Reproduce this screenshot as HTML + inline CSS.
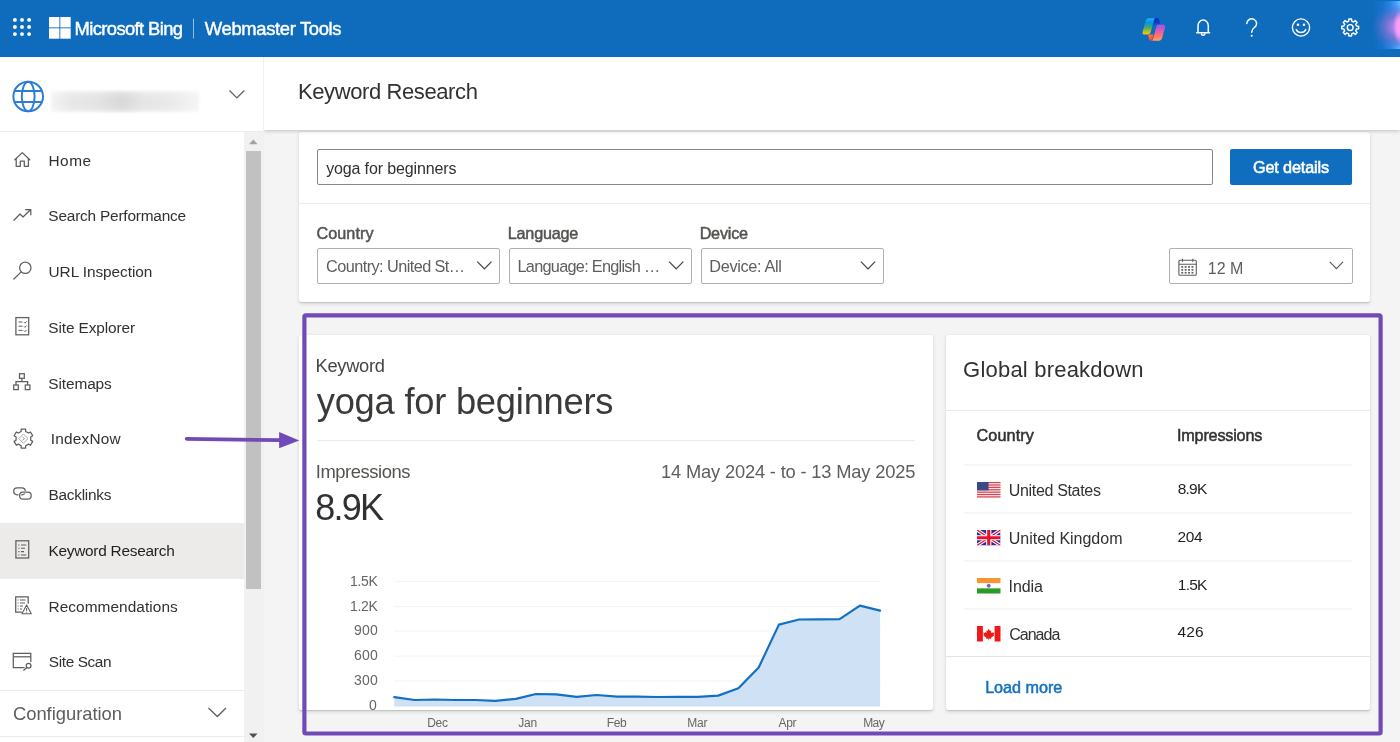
<!DOCTYPE html>
<html lang="en"><head><meta charset="utf-8"><title>Keyword Research - Bing Webmaster Tools</title>
<style>

*{box-sizing:border-box;margin:0;padding:0}
html,body{width:1400px;height:742px;overflow:hidden;background:#f4f4f4;font-family:"Liberation Sans",sans-serif;}
body{position:relative}
.a{position:absolute}
.t{position:absolute;white-space:pre;line-height:1;font-family:"Liberation Sans",sans-serif;}
.card{position:absolute;background:#fff;border-radius:2px;box-shadow:0 1.6px 3.6px rgba(0,0,0,.13),0 .3px .9px rgba(0,0,0,.11)}
.hl{position:absolute;height:1px;background:#edebe9}
.dd{position:absolute;height:36px;border:1px solid #b3b1af;border-radius:2px;background:#fff}
svg{position:absolute;overflow:visible}
#texts{position:absolute;left:0;top:0;width:1400px;height:742px;will-change:transform}

</style></head><body>

<!-- main area cards -->
<div class="card" style="left:299px;top:132px;width:1071px;height:170px"></div>
<div class="hl" style="left:299px;top:203px;width:1071px"></div>
<div class="a" style="left:317px;top:149px;width:896px;height:36px;border:1px solid #888684;border-radius:2px;background:#fff"></div>
<div class="a" style="left:1230px;top:149px;width:122px;height:36px;border-radius:2px;background:#106ebe"></div>
<div class="dd" style="left:317px;top:248px;width:183px"></div>
<div class="dd" style="left:509px;top:248px;width:182.500px"></div>
<div class="dd" style="left:700.500px;top:248px;width:183px"></div>
<div class="dd" style="left:1169px;top:248px;width:183.500px"></div>

<div class="card" style="left:299px;top:335px;width:634px;height:375px"></div>
<div class="hl" style="left:317px;top:440px;width:598px"></div>
<div class="card" style="left:946px;top:335px;width:424px;height:375px"></div>
<div class="hl" style="left:946px;top:410px;width:424px"></div>
<div class="hl" style="left:964px;top:464px;width:388px;height:2px;background:#f6f5f4"></div>
<div class="hl" style="left:964px;top:511.500px;width:388px;height:2px;background:#f6f5f4"></div>
<div class="hl" style="left:964px;top:559.500px;width:388px;height:2px;background:#f6f5f4"></div>
<div class="hl" style="left:964px;top:607.500px;width:388px;height:2px;background:#f6f5f4"></div>
<div class="hl" style="left:946px;top:656px;width:424px;background:#e6e4e2"></div>

<!-- CHART -->
<svg id="chart" style="left:0;top:0" width="1400" height="742" viewBox="0 0 1400 742">
<line x1="394" y1="581.5" x2="880.500" y2="581.5" stroke="#f3f3f3" stroke-width="1"/>
<line x1="394" y1="606.4" x2="880.500" y2="606.4" stroke="#f3f3f3" stroke-width="1"/>
<line x1="394" y1="631.2" x2="880.500" y2="631.2" stroke="#f3f3f3" stroke-width="1"/>
<line x1="394" y1="656.1" x2="880.500" y2="656.1" stroke="#f3f3f3" stroke-width="1"/>
<line x1="394" y1="680.9" x2="880.500" y2="680.9" stroke="#f3f3f3" stroke-width="1"/>
<line x1="394" y1="705.8" x2="880.500" y2="705.8" stroke="#f3f3f3" stroke-width="1"/>
<path d="M394.3,697.2 L414.5,700.0 L434.8,699.5 L455.0,700.0 L475.3,700.0 L495.5,700.9 L515.8,698.9 L536.0,694.0 L556.2,694.3 L576.5,696.8 L596.7,695.0 L617.0,696.6 L637.2,696.6 L657.4,697.0 L677.7,696.8 L697.9,696.8 L718.2,695.6 L738.4,688.3 L758.7,667.5 L778.9,624.6 L799.1,619.5 L819.4,619.4 L839.6,619.1 L859.9,605.6 L880.1,610.6 L880.1,706.5 L394.3,706.5 Z" fill="#cfe2f5"/>
<path d="M394.3,697.2 L414.5,700.0 L434.8,699.5 L455.0,700.0 L475.3,700.0 L495.5,700.9 L515.8,698.9 L536.0,694.0 L556.2,694.3 L576.5,696.8 L596.7,695.0 L617.0,696.6 L637.2,696.6 L657.4,697.0 L677.7,696.8 L697.9,696.8 L718.2,695.6 L738.4,688.3 L758.7,667.5 L778.9,624.6 L799.1,619.5 L819.4,619.4 L839.6,619.1 L859.9,605.6 L880.1,610.6" fill="none" stroke="#1170c4" stroke-width="2.200" stroke-linejoin="round" stroke-linecap="round"/>

</svg>

<!-- FLAGS -->
<svg style="left:977.4px;top:482px" width="23.500" height="15.500" viewBox="0 0 24 16" preserveAspectRatio="none"><rect width="24" height="16" fill="#f7e9ec"/><rect y="0.00" width="24" height="1.23" fill="#d8414f"/><rect y="2.46" width="24" height="1.23" fill="#d8414f"/><rect y="4.92" width="24" height="1.23" fill="#d8414f"/><rect y="7.38" width="24" height="1.23" fill="#d8414f"/><rect y="9.85" width="24" height="1.23" fill="#d8414f"/><rect y="12.31" width="24" height="1.23" fill="#d8414f"/><rect y="14.77" width="24" height="1.23" fill="#d8414f"/><rect width="11.800" height="8.600" fill="#3b4a8a"/></svg><svg style="left:977.4px;top:530px" width="23.500" height="15.500" viewBox="0 0 24 16" preserveAspectRatio="none"><clipPath id="ukc"><rect width="24" height="16"/></clipPath><g clip-path="url(#ukc)"><rect width="24" height="16" fill="#2b2f9e"/><path d="M0,0 L24,16 M24,0 L0,16" stroke="#fff" stroke-width="3.400"/><path d="M0,0 L24,16 M24,0 L0,16" stroke="#e8112d" stroke-width="1.300"/><path d="M12,0 V16 M0,8 H24" stroke="#fff" stroke-width="5.400"/><path d="M12,0 V16 M0,8 H24" stroke="#e8112d" stroke-width="3.200"/></g></svg><svg style="left:977.4px;top:577.7px" width="23.500" height="15.500" viewBox="0 0 24 16" preserveAspectRatio="none"><rect width="24" height="16" fill="#fff"/><rect width="24" height="5.300" fill="#f79433"/><rect y="10.700" width="24" height="5.300" fill="#2a9a2a"/><circle cx="12" cy="8" r="2" fill="#6b6fc0"/></svg><svg style="left:977.4px;top:626px" width="23.500" height="15.500" viewBox="0 0 24 16" preserveAspectRatio="none"><rect width="24" height="16" fill="#fff"/><rect width="6" height="16" fill="#f01818"/><rect x="18" width="6" height="16" fill="#f01818"/><path d="M12,2.800 l1.300,2.300 1.300,-.6 -.5,3 1.500,-1.400 .4,1 1.700,-.3 -.8,2.400 .7,.5 -3.300,2.300 .3,1.300 -2.300,-.4 v2.100 h-.6 v-2.100 l-2.300,.4 .3,-1.300 -3.300,-2.300 .7,-.5 -.8,-2.400 1.700,.3 .4,-1 1.500,1.400 -.5,-3 1.300,.6z" fill="#f01818"/></svg>

<!-- page header -->
<div class="a" style="left:264px;top:57px;width:1136px;height:73px;background:#fff;box-shadow:0 1px 4px rgba(0,0,0,.22)"></div>

<!-- purple annotation -->
<svg style="left:0;top:0" width="1400" height="742" viewBox="0 0 1400 742"><rect x="304.400" y="315.400" width="1076.200" height="418.100" rx="1.500" fill="none" stroke="#714ab6" stroke-width="4.200"/></svg>

<!-- sidebar -->
<div class="a" style="left:0;top:57px;width:264px;height:685px;background:#fff;border-right:1px solid #f1f0ef"></div>
<div class="hl" style="left:0;top:131px;width:263px"></div>
<div class="a" style="left:0;top:523px;width:244px;height:55.500px;background:#edebe9"></div>
<div class="hl" style="left:0;top:690px;width:244px"></div>
<div class="hl" style="left:0;top:735.500px;width:244px"></div>
<!-- scrollbar -->
<div class="a" style="left:244px;top:132px;width:19px;height:610px;background:#f1f1f1"></div>
<div class="a" style="left:245.500px;top:151px;width:15.500px;height:438px;background:#c1c1c1"></div>
<svg style="left:0;top:0" width="1400" height="742" viewBox="0 0 1400 742">
<polygon points="249,144.200 253.300,139.600 257.600,144.200" fill="#a3a3a3"/>
<polygon points="249,733.500 257.600,733.500 253.300,738" fill="#505050"/>
</svg>
<!-- blurred site name -->
<div class="a" style="left:51px;top:90.500px;width:148px;height:21.500px;background:linear-gradient(180deg,rgba(255,255,255,.35) 0%,rgba(255,255,255,0) 35%,rgba(255,255,255,0) 70%,rgba(255,255,255,.3) 100%),linear-gradient(90deg,#f4f4f4 0%,#e8e8e8 12%,#e4e4e4 30%,#d8d8d8 48%,#e5e5e5 62%,#e9e9e9 80%,#f5f5f5 100%);filter:blur(1.800px)"></div>

<svg style="left:0;top:0" width="1400" height="742" viewBox="0 0 1400 742">
<line x1="186.700" y1="438.800" x2="281" y2="440.200" stroke="#714ab6" stroke-width="3.750" stroke-linecap="round"/>
<polygon points="279.100,431.900 299.300,440.500 279.100,448.300" fill="#714ab6"/>
</svg>

<!-- top header -->
<div class="a" style="left:0;top:0;width:1400px;height:57px;background:#0f6cbd"></div>
<div class="a" style="left:1373px;top:1px;width:27px;height:48px;background:radial-gradient(ellipse 7px 17px at 100% 54%,#ffa2f9 0%,#f79df6 45%,rgba(225,148,245,0) 100%),radial-gradient(ellipse 28px 23px at 100% 54%,rgba(206,142,246,1) 0%,rgba(168,128,232,.95) 28%,rgba(124,113,206,.8) 52%,rgba(90,110,200,.4) 78%,rgba(70,110,195,0) 100%),linear-gradient(90deg,#0f6cbd 0%,#1872cc 35%,#2c84e4 65%,#4aa6ff 90%,#62beff 100%)"></div>

<svg id="icons" style="left:0;top:0" width="1400" height="742" viewBox="0 0 1400 742" fill="none">
<circle cx="14.9" cy="19.9" r="1.950" fill="#fff"/><circle cx="22.0" cy="19.9" r="1.950" fill="#fff"/><circle cx="29.1" cy="19.9" r="1.950" fill="#fff"/><circle cx="14.9" cy="27.0" r="1.950" fill="#fff"/><circle cx="22.0" cy="27.0" r="1.950" fill="#fff"/><circle cx="29.1" cy="27.0" r="1.950" fill="#fff"/><circle cx="14.9" cy="34.1" r="1.950" fill="#fff"/><circle cx="22.0" cy="34.1" r="1.950" fill="#fff"/><circle cx="29.1" cy="34.1" r="1.950" fill="#fff"/><rect x="49" y="17" width="10.400" height="10.400" fill="#fff"/><rect x="60.3" y="17" width="10.400" height="10.400" fill="#fff"/><rect x="49" y="28.3" width="10.400" height="10.400" fill="#fff"/><rect x="60.3" y="28.3" width="10.400" height="10.400" fill="#fff"/><rect x="193" y="18.500" width="1" height="20" fill="#fff" opacity=".55"/><defs>
<linearGradient id="cp1" x1="0" y1="0" x2="0" y2="1"><stop offset="0" stop-color="#22b0fa"/><stop offset=".25" stop-color="#0c90e8"/><stop offset=".55" stop-color="#3dab6e"/><stop offset=".8" stop-color="#b4bd2c"/><stop offset="1" stop-color="#ffc900"/></linearGradient>
<linearGradient id="cp2" x1="0" y1="0" x2="0" y2="1"><stop offset="0" stop-color="#b45af2"/><stop offset=".12" stop-color="#a855ea"/><stop offset=".45" stop-color="#ee5c9a"/><stop offset=".75" stop-color="#ff7a70"/><stop offset="1" stop-color="#ffa54f"/></linearGradient>
<linearGradient id="cp3" x1="0" y1="0" x2="0" y2="1"><stop offset="0" stop-color="#0a2cc0"/><stop offset=".3" stop-color="#0c40cc"/><stop offset=".5" stop-color="#0f62c8"/><stop offset=".7" stop-color="#0f6cbd"/><stop offset="1" stop-color="#0f6cbd"/></linearGradient>
<linearGradient id="cp4" x1="0" y1="0" x2="1" y2="1"><stop offset="0" stop-color="#ff8a3c"/><stop offset=".5" stop-color="#ff5a32"/><stop offset="1" stop-color="#e03c20"/></linearGradient>
</defs>
<path d="M1154.600,18.300 h2.300 c1.300,0 2,.6 2.300,1.800 l1.300,4.600 h-3.500 c-1.600,0 -2.400,.8 -2.800,2.200 l-1.900,7 h-1.800 l3.100,-11.500 c.4,-1.600 .6,-2.900 1,-4.100z" fill="url(#cp3)"/>
<path d="M1148.700,18.300 h5.900 c-.5,1 -.8,2.200 -1.200,3.700 l-2.600,9.800 c-.5,1.800 -1.500,2.800 -3.300,2.800 h-2.900 c-1.600,0 -2.400,-1.100 -2,-2.700 l2.700,-10 c.6,-2.200 1.600,-3.600 3.400,-3.600z" fill="url(#cp1)"/>
<path d="M1148.100,34.600 h5.700 l-1.400,6.100 h-1.300 c-1.100,0 -1.700,-.6 -2,-1.700z" fill="url(#cp4)"/>
<path d="M1157.400,24.700 h5.500 c1.700,0 2.500,1.100 2.100,2.800 l-2.600,9.700 c-.6,2.200 -1.700,3.500 -3.600,3.500 h-6.400 c.5,-1 .8,-2.100 1.200,-3.500 l2.100,-8 c.4,-1.700 .9,-3.300 1.700,-4.500z" fill="url(#cp2)"/>
<path d="M1198,32.700 V25.600 a5.150,5.500 0 0 1 10.300,0 V32.700 M1196.700,32.700 H1209.600 M1201.500,34.200 a1.800,1.800 0 0 0 3.300,0" stroke="#fff" stroke-width="1.500" stroke-linecap="round" stroke-linejoin="round"/><path d="M1246.800,23.500 a4.900,4.700 0 1 1 7.600,4 c-1.900,1.300 -2.700,2.200 -2.700,4.700" stroke="#fff" stroke-width="1.500" stroke-linecap="round"/><circle cx="1251.700" cy="35.700" r="1" fill="#fff"/><circle cx="1301" cy="27.500" r="8.600" stroke="#fff" stroke-width="1.400"/><circle cx="1298" cy="24.700" r="1.300" fill="#fff"/><circle cx="1304" cy="24.700" r="1.300" fill="#fff"/><path d="M1296.200,29.600 a5.400,5.400 0 0 0 9.600,0" stroke="#fff" stroke-width="1.400" stroke-linecap="round"/><path d="M1348.86,19.06 L1351.54,19.06 L1351.72,21.18 L1353.60,21.96 L1355.23,20.58 L1357.12,22.47 L1355.74,24.10 L1356.52,25.98 L1358.64,26.16 L1358.64,28.84 L1356.52,29.02 L1355.74,30.90 L1357.12,32.53 L1355.23,34.42 L1353.60,33.04 L1351.72,33.82 L1351.54,35.94 L1348.86,35.94 L1348.68,33.82 L1346.80,33.04 L1345.17,34.42 L1343.28,32.53 L1344.66,30.90 L1343.88,29.02 L1341.76,28.84 L1341.76,26.16 L1343.88,25.98 L1344.66,24.10 L1343.28,22.47 L1345.17,20.58 L1346.80,21.96 L1348.68,21.18Z" stroke="#fff" stroke-width="1.45" stroke-linejoin="round"/><circle cx="1350.2" cy="27.5" r="2.9" stroke="#fff" stroke-width="1.45"/><g stroke="#2b7cd3" stroke-width="1.950"><circle cx="28.200" cy="96.500" r="14.800"/><ellipse cx="28.200" cy="96.500" rx="6.400" ry="14.800"/><path d="M14.600,91 H41.800 M14.600,102 H41.800"/></g><path d="M229.500,90.500 L236.900,98 L244.300,90.500" stroke="#605e5c" stroke-width="1.200"/><path d="M208.500,708 L217.300,716.500 L226,708" stroke="#605e5c" stroke-width="1.300"/><path d="M14.800,159.800 L22.300,152.600 L29.800,159.800 M16.200,158.600 V166.400 H20.300 V161 H24.300 V166.400 H28.400 V158.600" stroke="#605e5c" stroke-width="1.25" stroke-linejoin="round" stroke-linecap="round"/><path d="M14,220.200 L20,214 L23,217 L30.500,209.800 M25.500,209.600 H30.800 V214.800" stroke="#605e5c" stroke-width="1.25" stroke-linejoin="round" stroke-linecap="round"/><circle cx="25.300" cy="267.800" r="5.700" stroke="#605e5c" stroke-width="1.25"/><path d="M21.200,271.900 L13.900,279" stroke="#605e5c" stroke-width="1.25" stroke-linecap="round"/><rect x="15.900" y="317.600" width="12.800" height="17.200" stroke="#605e5c" stroke-width="1.25"/><path d="M18.500,322 H22.500 M18.500,326.200 H22.500 M18.500,330.400 H22.500 M24,322.200 l1,1 1.600,-1.800 M24,326.400 l1,1 1.600,-1.800 M24,330.600 l1,1 1.600,-1.800" stroke="#605e5c" stroke-width="1"/><g stroke="#605e5c" stroke-width="1.25"><rect x="19.500" y="373.700" width="4.800" height="4.600"/><rect x="13.700" y="385" width="4.600" height="4.600"/><rect x="25.300" y="385" width="4.600" height="4.600"/><path d="M21.900,378.300 V381.700 M16,385 V381.700 H27.600 V385"/></g><path d="M21.18,429.16 L25.62,429.16 L25.64,431.44 L28.48,433.08 L30.47,431.96 L32.69,435.80 L30.72,436.96 L30.72,440.24 L32.69,441.40 L30.47,445.24 L28.48,444.12 L25.64,445.76 L25.62,448.04 L21.18,448.04 L21.16,445.76 L18.32,444.12 L16.33,445.24 L14.11,441.40 L16.08,440.24 L16.08,436.96 L14.11,435.80 L16.33,431.96 L18.32,433.08 L21.16,431.44Z" stroke="#605e5c" stroke-width="1.25" stroke-linejoin="round"/><path d="M23.400,434 L28,438.600 L23.400,443.200 L18.800,438.600 Z" stroke="#a19f9d" stroke-width=".9"/><path d="M22.600,436.800 L24.500,438.600 L22.600,440.400" stroke="#8a8886" stroke-width=".9"/><g stroke-width="1.25"><rect x="13.700" y="487.900" width="11.600" height="6.900" rx="3.450" stroke="#605e5c"/><rect x="19.600" y="492.200" width="11.600" height="6.900" rx="3.450" stroke="#fff" stroke-width="2.600"/><rect x="19.600" y="492.200" width="11.600" height="6.900" rx="3.450" stroke="#605e5c"/></g><rect x="15.900" y="540.800" width="12.800" height="17.200" stroke="#605e5c" stroke-width="1.25"/><path d="M18.300,545 h1.200 M21,545 H26.300 M18.300,548.300 h1.200 M21,548.300 H25 M18.300,551.600 h1.200 M21,551.600 H24 M18.300,554.900 h1.200 M21,554.900 H26.300" stroke="#605e5c" stroke-width="1.050"/><path d="M28.200,603.800 V596.800 H15.700 V612 H21.800" stroke="#605e5c" stroke-width="1.25"/><path d="M17.600,600 h1 M20,600 H25.600 M17.600,603 h1 M20,603 H25 M17.600,606 h1 M20,606 H23 M17.600,609 h1 M20,609 H22" stroke="#605e5c" stroke-width="1"/><path d="M26.600,605 L31.300,613.700 H21.900 Z" stroke="#605e5c" stroke-width="1.050" stroke-linejoin="round" fill="#fff"/><path d="M26.600,608 V611 M26.600,611.800 v.8" stroke="#605e5c" stroke-width="1"/><path d="M24.600,667.500 H13.300 V653.400 H30.800 V662" stroke="#605e5c" stroke-width="1.25"/><path d="M13.300,656.800 H30.800" stroke="#605e5c" stroke-width="1.25"/><circle cx="28.600" cy="665.700" r="2.400" stroke="#605e5c" stroke-width="1.200"/><path d="M26.900,667.500 L23.800,670.300" stroke="#605e5c" stroke-width="1.200" stroke-linecap="round"/><path d="M477.29999999999995,261.600 L484.4,268.900 L491.5,261.600" stroke="#484644" stroke-width="1.300"/><path d="M669.1,261.600 L676.2,268.900 L683.3000000000001,261.600" stroke="#484644" stroke-width="1.300"/><path d="M860.9,261.600 L868,268.900 L875.1,261.600" stroke="#484644" stroke-width="1.300"/><path d="M1329.800,261.800 L1336.400,268.600 L1343,261.800" stroke="#605e5c" stroke-width="1.200"/><g stroke="#605e5c" stroke-width="1.100"><rect x="1178.900" y="260.300" width="17.400" height="14.900" rx="1"/><path d="M1178.900,264.300 H1196.300 M1182.500,258.700 V261.700 M1192.700,258.700 V261.700"/></g><rect x="1181.3" y="266.1" width="1.900" height="1.700" fill="#605e5c"/><rect x="1184.7" y="266.1" width="1.900" height="1.700" fill="#605e5c"/><rect x="1188.1" y="266.1" width="1.900" height="1.700" fill="#605e5c"/><rect x="1191.5" y="266.1" width="1.900" height="1.700" fill="#605e5c"/><rect x="1181.3" y="269.0" width="1.900" height="1.700" fill="#605e5c"/><rect x="1184.7" y="269.0" width="1.900" height="1.700" fill="#605e5c"/><rect x="1188.1" y="269.0" width="1.900" height="1.700" fill="#605e5c"/><rect x="1191.5" y="269.0" width="1.900" height="1.700" fill="#605e5c"/><rect x="1181.3" y="271.9" width="1.900" height="1.700" fill="#605e5c"/><rect x="1184.7" y="271.9" width="1.900" height="1.700" fill="#605e5c"/><rect x="1188.1" y="271.9" width="1.900" height="1.700" fill="#605e5c"/><rect x="1191.5" y="271.9" width="1.900" height="1.700" fill="#605e5c"/>
</svg>

<div id="texts">
<span class="t" style="left:74.59px;top:19.70px;font-size:18.4px;font-weight:400;color:#fff;letter-spacing:-0.624px;-webkit-text-stroke:.45px #fff">Microsoft Bing</span>
<span class="t" style="left:204.82px;top:19.70px;font-size:18.4px;font-weight:400;color:#fff;letter-spacing:-0.335px;-webkit-text-stroke:.45px #fff">Webmaster Tools</span>
<span class="t" style="left:297.90px;top:81.30px;font-size:22px;font-weight:400;color:#323130;letter-spacing:-0.390px;">Keyword Research</span>
<span class="t" style="left:48.40px;top:152.70px;font-size:15.4px;font-weight:400;color:#323130;letter-spacing:0.549px;">Home</span>
<span class="t" style="left:48.37px;top:208.40px;font-size:15.4px;font-weight:400;color:#323130;letter-spacing:-0.201px;">Search Performance</span>
<span class="t" style="left:48.58px;top:264.10px;font-size:15.4px;font-weight:400;color:#323130;letter-spacing:-0.074px;">URL Inspection</span>
<span class="t" style="left:48.37px;top:319.90px;font-size:15.4px;font-weight:400;color:#323130;letter-spacing:-0.112px;">Site Explorer</span>
<span class="t" style="left:48.37px;top:375.60px;font-size:15.4px;font-weight:400;color:#323130;letter-spacing:-0.114px;">Sitemaps</span>
<span class="t" style="left:50.72px;top:431.30px;font-size:15.4px;font-weight:400;color:#323130;letter-spacing:0.202px;">IndexNow</span>
<span class="t" style="left:48.40px;top:487.00px;font-size:15.4px;font-weight:400;color:#323130;letter-spacing:-0.233px;">Backlinks</span>
<span class="t" style="left:48.40px;top:542.70px;font-size:15.4px;font-weight:400;color:#201f1e;letter-spacing:-0.247px;">Keyword Research</span>
<span class="t" style="left:48.50px;top:598.70px;font-size:15.4px;font-weight:400;color:#323130;letter-spacing:0.064px;">Recommendations</span>
<span class="t" style="left:48.87px;top:654.40px;font-size:15.4px;font-weight:400;color:#323130;letter-spacing:-0.396px;">Site Scan</span>
<span class="t" style="left:12.97px;top:704.50px;font-size:18.4px;font-weight:400;color:#605e5c;letter-spacing:-0.031px;">Configuration</span>
<span class="t" style="left:326.14px;top:160.90px;font-size:16px;font-weight:400;color:#323130;letter-spacing:-0.134px;">yoga for beginners</span>
<span class="t" style="left:1253.02px;top:159.20px;font-size:16.2px;font-weight:400;color:#fff;letter-spacing:-0.133px;-webkit-text-stroke:.55px #fff">Get details</span>
<span class="t" style="left:316.40px;top:224.80px;font-size:16.2px;font-weight:400;color:#565452;letter-spacing:0.095px;-webkit-text-stroke:.5px currentColor">Country</span>
<span class="t" style="left:507.87px;top:224.80px;font-size:16.2px;font-weight:400;color:#565452;letter-spacing:-0.245px;-webkit-text-stroke:.5px currentColor">Language</span>
<span class="t" style="left:699.65px;top:224.80px;font-size:16.2px;font-weight:400;color:#565452;letter-spacing:-0.211px;-webkit-text-stroke:.5px currentColor">Device</span>
<span class="t" style="left:326.09px;top:258.10px;font-size:16.3px;font-weight:400;color:#605e5c;letter-spacing:-0.571px;">Country: United St…</span>
<span class="t" style="left:517.46px;top:258.10px;font-size:16.3px;font-weight:400;color:#605e5c;letter-spacing:-0.718px;">Language: English …</span>
<span class="t" style="left:709.26px;top:258.10px;font-size:16.3px;font-weight:400;color:#605e5c;letter-spacing:-0.328px;">Device: All</span>
<span class="t" style="left:1207.82px;top:261.30px;font-size:16px;font-weight:400;color:#605e5c;letter-spacing:0.016px;">12 M</span>
<span class="t" style="left:315.52px;top:357.00px;font-size:18.3px;font-weight:400;color:#484644;letter-spacing:-0.276px;">Keyword</span>
<span class="t" style="left:316.72px;top:383.60px;font-size:36.3px;font-weight:400;color:#3b3a39;letter-spacing:-0.227px;">yoga for beginners</span>
<span class="t" style="left:315.75px;top:462.50px;font-size:18.4px;font-weight:400;color:#55534f;letter-spacing:-0.435px;">Impressions</span>
<span class="t" style="left:661.08px;top:462.70px;font-size:18.3px;font-weight:400;color:#605e5c;letter-spacing:-0.168px;">14 May 2024 - to - 13 May 2025</span>
<span class="t" style="left:315.36px;top:490.20px;font-size:36px;font-weight:400;color:#323130;letter-spacing:-1.792px;">8.9K</span>
<span class="t" style="left:350.00px;top:573.60px;font-size:14px;font-weight:400;color:#666666;letter-spacing:-0.319px;">1.5K</span>
<span class="t" style="left:350.00px;top:598.50px;font-size:14px;font-weight:400;color:#666666;letter-spacing:-0.319px;">1.2K</span>
<span class="t" style="left:353.95px;top:623.30px;font-size:14px;font-weight:400;color:#666666;letter-spacing:0.265px;">900</span>
<span class="t" style="left:353.92px;top:648.20px;font-size:14px;font-weight:400;color:#666666;letter-spacing:0.278px;">600</span>
<span class="t" style="left:353.94px;top:673.00px;font-size:14px;font-weight:400;color:#666666;letter-spacing:0.268px;">300</span>
<span class="t" style="left:369.02px;top:697.90px;font-size:14px;font-weight:400;color:#666666;letter-spacing:0.000px;">0</span>
<span class="t" style="left:427.22px;top:717.30px;font-size:12px;font-weight:400;color:#666666;letter-spacing:-0.279px;">Dec</span>
<span class="t" style="left:518.20px;top:717.30px;font-size:12px;font-weight:400;color:#666666;letter-spacing:-0.185px;">Jan</span>
<span class="t" style="left:606.82px;top:717.30px;font-size:12px;font-weight:400;color:#666666;letter-spacing:-0.359px;">Feb</span>
<span class="t" style="left:687.35px;top:717.30px;font-size:12px;font-weight:400;color:#666666;letter-spacing:-0.248px;">Mar</span>
<span class="t" style="left:778.56px;top:717.30px;font-size:12px;font-weight:400;color:#666666;letter-spacing:-0.359px;">Apr</span>
<span class="t" style="left:863.19px;top:717.30px;font-size:12px;font-weight:400;color:#666666;letter-spacing:-0.596px;">May</span>
<span class="t" style="left:963.12px;top:359.30px;font-size:22px;font-weight:400;color:#323130;letter-spacing:0.204px;">Global breakdown</span>
<span class="t" style="left:976.56px;top:427.10px;font-size:16.2px;font-weight:400;color:#323130;letter-spacing:0.105px;-webkit-text-stroke:.5px currentColor">Country</span>
<span class="t" style="left:1176.99px;top:427.10px;font-size:16.2px;font-weight:400;color:#323130;letter-spacing:-0.196px;-webkit-text-stroke:.5px currentColor">Impressions</span>
<span class="t" style="left:1008.79px;top:482.70px;font-size:16px;font-weight:400;color:#323130;letter-spacing:-0.330px;">United States</span>
<span class="t" style="left:1008.79px;top:531.00px;font-size:16px;font-weight:400;color:#323130;letter-spacing:-0.013px;">United Kingdom</span>
<span class="t" style="left:1008.52px;top:578.60px;font-size:16px;font-weight:400;color:#323130;letter-spacing:-0.057px;">India</span>
<span class="t" style="left:1009.26px;top:627.10px;font-size:16px;font-weight:400;color:#323130;letter-spacing:-1.001px;">Canada</span>
<span class="t" style="left:1177.74px;top:480.80px;font-size:15.5px;font-weight:400;color:#201f1e;letter-spacing:-0.789px;">8.9K</span>
<span class="t" style="left:1177.58px;top:528.90px;font-size:15.5px;font-weight:400;color:#201f1e;letter-spacing:-0.368px;">204</span>
<span class="t" style="left:1177.87px;top:576.60px;font-size:15.5px;font-weight:400;color:#201f1e;letter-spacing:-0.830px;">1.5K</span>
<span class="t" style="left:1177.44px;top:624.20px;font-size:15.5px;font-weight:400;color:#201f1e;letter-spacing:0.153px;">426</span>
<span class="t" style="left:985.15px;top:678.80px;font-size:16.2px;font-weight:400;color:#1570c0;letter-spacing:-0.023px;-webkit-text-stroke:.5px currentColor">Load more</span>
</div>
</body></html>
